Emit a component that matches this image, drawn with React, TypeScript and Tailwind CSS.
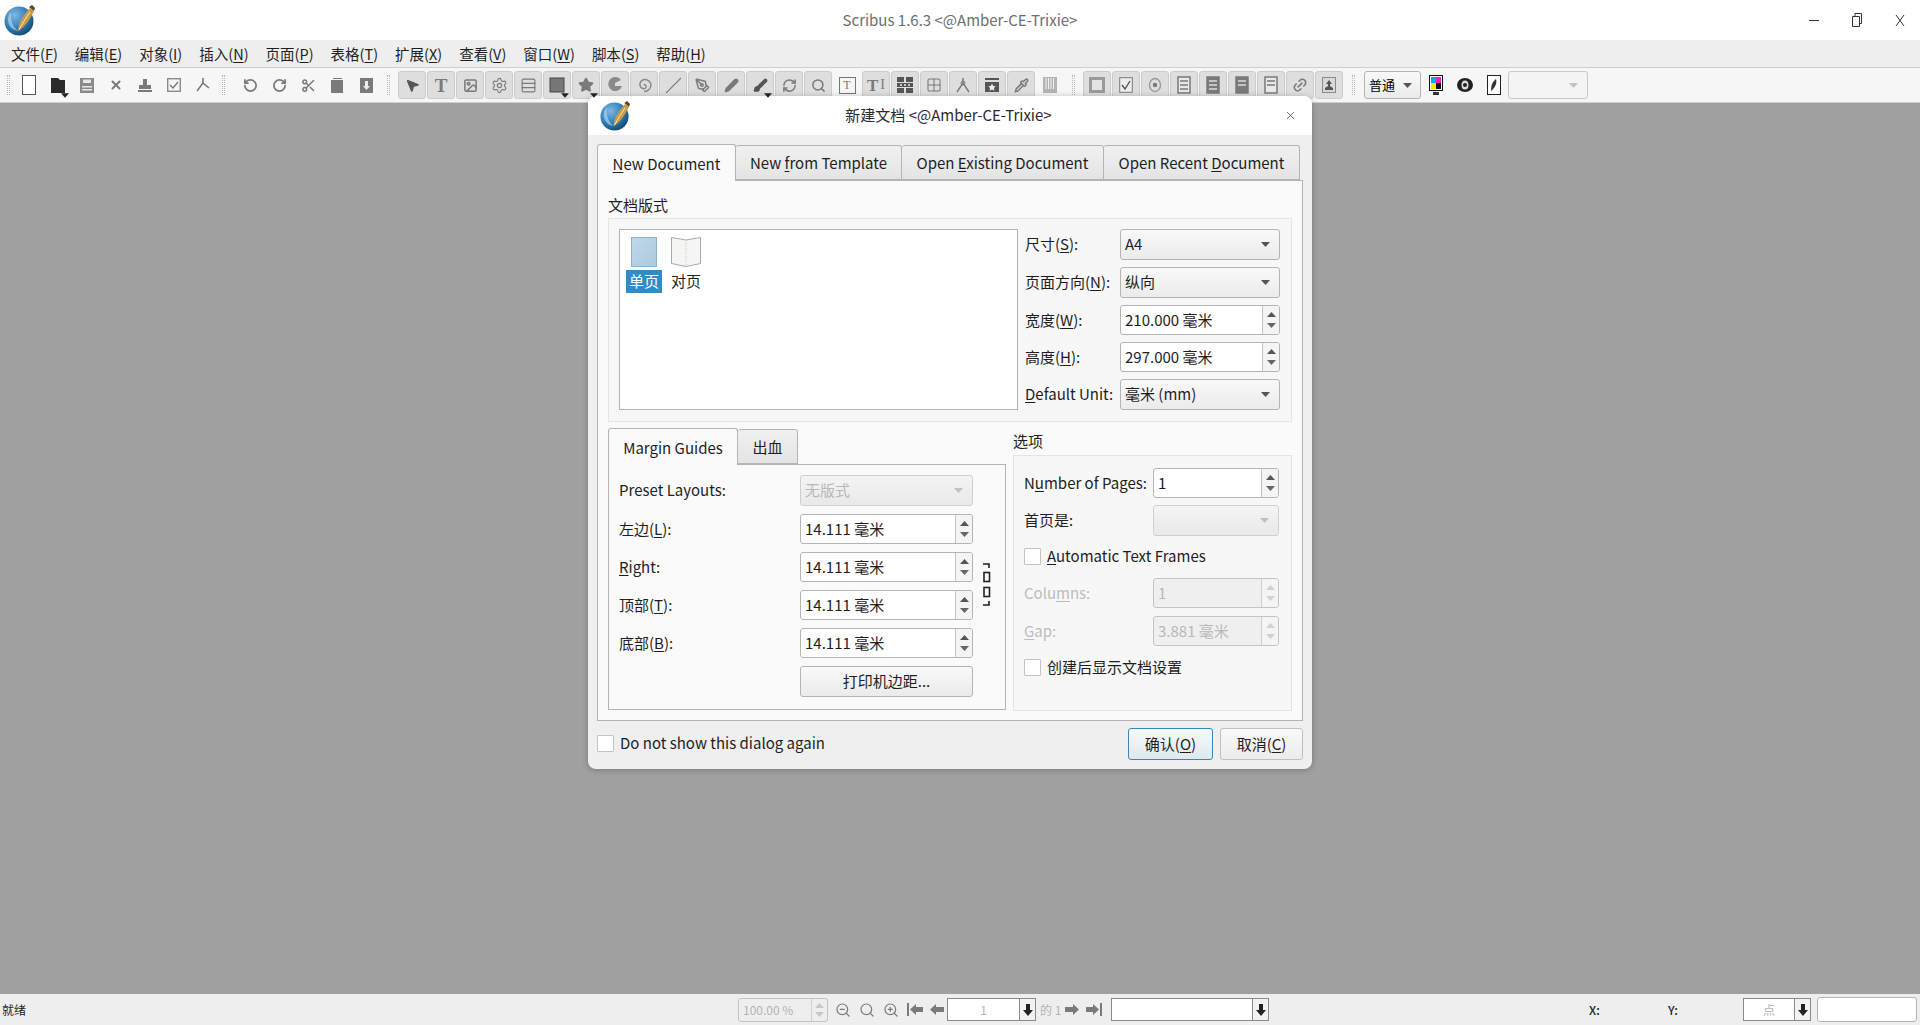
import type { ReactNode } from "react";
import {
  Brush, Grid2x2, Image, Link2, MousePointer2, Pencil, PenTool, Pipette, RefreshCw, RotateCcw, RotateCw,
  Rows3, Scissors, Search, Settings, Slash, Star, X, ZoomIn, ZoomOut,
} from "lucide-react";

const font = { fontFamily: '"Noto Sans CJK SC", "Noto Sans", sans-serif' };
const gray = "#7a7a7a";

function Logo({ size }: { size: number }) {
  return (
    <svg width={size} height={size} viewBox="0 0 32 32">
      <defs>
        <radialGradient id="lg" cx="35%" cy="30%" r="80%">
          <stop offset="0" stopColor="#7fb6e2" />
          <stop offset="0.55" stopColor="#2f7fb8" />
          <stop offset="1" stopColor="#0f3f66" />
        </radialGradient>
      </defs>
      <circle cx="15" cy="17" r="14.5" fill="url(#lg)" />
      <path d="M7 8c-1 8 2 15 7 19-6-1-10-6-10-11 0-3 1-6 3-8z" fill="#cfe4f4" opacity="0.55" />
      <path d="M14 27c0-7 4-15 12-23l4 3c-4 8-8 15-16 20z" fill="#c89a4a" />
      <path d="M25 3l3-2 3 3-1 3z" fill="#5b4420" />
      <path d="M15 26c3-6 7-12 11-18" stroke="#fbe7b8" strokeWidth="1" fill="none" />
    </svg>
  );
}

function Tri({ color = "#555", w = 9 }: { color?: string; w?: number }) {
  return (
    <svg width={w} height={5} viewBox="0 0 9 5">
      <polygon points="0,0 9,0 4.5,5" fill={color} />
    </svg>
  );
}

function Dropper() {
  return (
    <span className="absolute right-[-4px] bottom-[-5px] z-10">
      <Tri color="#222" w={8} />
    </span>
  );
}

function Doc({ lines = 3, dark = false }: { lines?: number; dark?: boolean }) {
  return (
    <svg width="16" height="18" viewBox="0 0 16 18">
      <rect x="2" y="1" width="12" height="16" fill={dark ? gray : "#e8e8e8"} stroke={gray} strokeWidth="1.5" />
      {Array.from({ length: lines }).map((_, i) => (
        <path key={i} d={`M4 ${5 + i * 4}h8`} stroke={dark ? "#ddd" : gray} strokeWidth="1.5" />
      ))}
    </svg>
  );
}

const iconProps = { size: 17, color: gray, strokeWidth: 2.4 };

const fileIcons: ReactNode[] = [
  <svg width="14" height="20" viewBox="0 0 14 20"><rect x="0.5" y="0.5" width="13" height="19" fill="#fff" stroke="#555" /></svg>,
  <span className="relative flex">
    <svg width="14" height="15" viewBox="0 0 14 15"><path d="M0 0h7l2 2h5v13H0z" fill="#2b2b2b" /></svg>
    <Dropper />
  </span>,
  <svg width="14" height="15" viewBox="0 0 14 15"><path d="M0 0h14v15H0z" fill="#8a8a8a" /><path d="M3 1.500h8v3.500H3zM2 8h10v1.500H2zM2 11h10v1.500H2z" fill="#e8e8e8" /></svg>,
  <X size={14} color={gray} strokeWidth={3.4} />,
  <svg width="14" height="14" viewBox="0 0 14 14"><path d="M5 1h4v6H5zM1 7h12v4H1zM0 12h14v2H0z" fill={gray} /></svg>,
  <svg width="14" height="14" viewBox="0 0 14 14"><rect x="0.7" y="0.7" width="12.6" height="12.6" fill="none" stroke="#8a8a8a" strokeWidth="1.4" /><path d="M3 7l3 3 5-6" fill="none" stroke={gray} strokeWidth="1.4" /></svg>,
  <svg width="14" height="14" viewBox="0 0 14 14"><path d="M7 0v5L1 13M7 5l6 5" fill="none" stroke={gray} strokeWidth="1.6" /></svg>,
];

const editIcons: ReactNode[] = [
  <RotateCcw {...iconProps} strokeWidth={2.8} size={15} />,
  <RotateCw {...iconProps} strokeWidth={2.8} size={15} />,
  <Scissors {...iconProps} size={15} />,
  <svg width="13" height="15" viewBox="0 0 13 15"><path d="M2 0h9v1H2zM0 2h12v13H0z" fill={gray} /></svg>,
  <svg width="13" height="15" viewBox="0 0 13 15"><path d="M0 0h13v15H0z" fill={gray} /><path d="M5 3h3v5h2l-3.500 4L3 8h2z" fill="#eee" /></svg>,
];

const serifT = (size: string, extra?: ReactNode) => (
  <span className="flex items-center leading-none" style={{ fontFamily: '"Liberation Serif", serif', color: gray, fontSize: size, fontWeight: 700 }}>
    T{extra}
  </span>
);

const toolIcons: ReactNode[] = [
  <MousePointer2 size={15} color="#555" fill="#555" />,
  serifT("19px"),
  <Image {...iconProps} size={15} />,
  <Settings {...iconProps} strokeWidth={1.6} />,
  <Rows3 {...iconProps} strokeWidth={1.6} />,
  <span className="relative flex">
    <svg width="16" height="16" viewBox="0 0 16 16"><rect x="1" y="1" width="14" height="14" fill="#777" stroke="#444" /></svg>
    <Dropper />
  </span>,
  <span className="relative flex">
    <Star size={16} color={gray} fill={gray} />
    <Dropper />
  </span>,
  <svg width="16" height="16" viewBox="0 0 16 16"><path d="M14 3A7 7 0 1 0 15 9H8V6z" fill="#8a8a8a" /></svg>,
  <svg width="16" height="16" viewBox="0 0 16 16"><path d="M8 8.500a1 1 0 0 1 1-1 2.500 2.500 0 0 1 0 4 4 4 0 0 1-5-3 5 5 0 0 1 5-6 6 6 0 0 1 6 6 7 7 0 0 1-7 6" fill="none" stroke="#8a8a8a" strokeWidth="1.5" /></svg>,
  <Slash {...iconProps} strokeWidth={1.8} />,
  <PenTool {...iconProps} size={15} />,
  <Pencil size={15} color={gray} fill={gray} />,
  <span className="relative flex">
    <Brush size={15} color="#555" fill="#555" />
    <Dropper />
  </span>,
  <RefreshCw {...iconProps} size={15} />,
  <Search {...iconProps} size={15} />,
  <span className="flex h-[17px] w-[17px] items-center justify-center border border-[#777] text-[12px] leading-none" style={{ fontFamily: '"Liberation Serif", serif', color: gray }}>T</span>,
  serifT("17px", <span className="ml-[2px] text-[14px] font-normal">I</span>),
  <svg width="16" height="16" viewBox="0 0 16 16"><path d="M0 0h7v5H0zM9 0h7v5H9zM0 11h7v5H0zM9 11h7v5H9zM0 6h16v4H0z" fill="#555" /><path d="M3 8h2M7 8h2M11 8h2" stroke="#eee" strokeWidth="1.4" /></svg>,
  <Grid2x2 {...iconProps} strokeWidth={1.6} size={16} />,
  <svg width="16" height="16" viewBox="0 0 16 16"><path d="M8 1v5M8 6l-6 9M8 6l6 9" fill="none" stroke={gray} strokeWidth="1.4" /><circle cx="8" cy="6" r="2" fill="none" stroke={gray} /></svg>,
  <svg width="16" height="16" viewBox="0 0 16 16"><path d="M1 1h14v2H1zM1 5h14v10H1z" fill="#555" /><path d="M8 6.500l1.200 2.500 2.600.3-1.900 1.800.5 2.600L8 12.400l-2.400 1.300.5-2.600-1.900-1.800 2.600-.3z" fill="#eee" /></svg>,
  <Pipette {...iconProps} size={15} />,
];

const pdfIcons: ReactNode[] = [
  <svg width="16" height="16" viewBox="0 0 16 16"><rect x="0" y="0" width="16" height="16" fill="#9a9a9a" /><rect x="3" y="3" width="10" height="10" fill="#e3e3e3" /></svg>,
  <svg width="14" height="16" viewBox="0 0 14 16"><rect x="0.7" y="0.7" width="12.6" height="14.6" fill="#eee" stroke={gray} /><path d="M3 8l3 4 5-8" fill="none" stroke="#555" strokeWidth="1.4" /></svg>,
  <svg width="14" height="16" viewBox="0 0 14 16"><ellipse cx="7" cy="8" rx="5.500" ry="6.500" fill="none" stroke="#999" strokeWidth="1.4" /><circle cx="7" cy="8" r="2.200" fill={gray} /></svg>,
  <Doc lines={3} />,
  <Doc lines={3} dark />,
  <Doc lines={2} dark />,
  <Doc lines={2} />,
  <Link2 {...iconProps} size={16} className="-rotate-45" />,
  <svg width="14" height="16" viewBox="0 0 14 16"><rect x="0.5" y="0.5" width="13" height="15" fill="#d8d8d8" stroke="#8a8a8a" /><path d="M7 3l3 4H8v2l3 2v2H3v-2l3-2V7H4z" fill="#555" /></svg>,
];

function ToolBtn({ children, pressed = true }: { children: ReactNode; pressed?: boolean }) {
  return (
    <div
      className={`flex h-[28px] w-[28px] shrink-0 items-center justify-center rounded-[3px] border ${
        pressed ? "border-[#cccccc] bg-[#dedede]" : "border-transparent"
      }`}
    >
      {children}
    </div>
  );
}

function Handle({ className = "" }: { className?: string }) {
  return <div className={`h-[20px] w-[3px] shrink-0 border-x border-dotted border-[#b8b8b8] ${className}`} />;
}

function Combo({ value, disabled, className = "" }: { value?: ReactNode; disabled?: boolean; className?: string }) {
  return (
    <div
      className={`flex h-[31px] items-center justify-between rounded-[3px] border pl-[4px] pr-[9px] ${
        disabled
          ? "border-[#cfcfcf] bg-gradient-to-b from-[#f4f4f4] to-[#e9e9e9] text-[#b8b8b8]"
          : "border-[#b4b4b4] bg-gradient-to-b from-[#f9f9f9] to-[#ebebeb]"
      } ${className}`}
    >
      <span>{value}</span>
      <Tri color={disabled ? "#c0c0c0" : "#555"} />
    </div>
  );
}

function Spin({ value, disabled, className = "" }: { value: string; disabled?: boolean; className?: string }) {
  return (
    <div
      className={`flex h-[30px] items-stretch overflow-hidden rounded-[3px] border ${
        disabled ? "border-[#c4c4c4] bg-[#efefef] text-[#b8b8b8]" : "border-[#b4b4b4] bg-white"
      } ${className}`}
    >
      <span className="flex flex-1 items-center pl-[4px]">{value}</span>
      <span className={`flex w-[17px] flex-col items-center justify-center gap-[6px] border-l ${disabled ? "border-[#d0d0d0] bg-[#f4f4f4]" : "border-[#c4c4c4] bg-[#f4f4f4]"}`}>
        <span className="rotate-180">
          <Tri color={disabled ? "#d0d0d0" : "#555"} />
        </span>
        <Tri color={disabled ? "#d0d0d0" : "#666"} />
      </span>
    </div>
  );
}

function Check({ children }: { children: ReactNode }) {
  return (
    <div className="flex h-[17px] items-center gap-[6px]">
      <span className="h-[17px] w-[17px] shrink-0 rounded-[1px] border border-[#c4c4c4] bg-white" />
      <span>{children}</span>
    </div>
  );
}

function DialogTab({ children, active, className = "" }: { children: ReactNode; active?: boolean; className?: string }) {
  return (
    <div
      className={`relative flex items-center justify-center rounded-t-[3px] border border-[#b4b4b4] pt-[2px] ${
        active
          ? "z-10 -mb-px h-[37px] border-b-0 bg-[#fafafa]"
          : "h-[35px] bg-gradient-to-b from-[#f0f0f0] to-[#e4e4e4]"
      } ${className}`}
    >
      {children}
    </div>
  );
}

const menus: [string, string][] = [
  ["文件", "F"], ["编辑", "E"], ["对象", "I"], ["插入", "N"], ["页面", "P"], ["表格", "T"],
  ["扩展", "X"], ["查看", "V"], ["窗口", "W"], ["脚本", "S"], ["帮助", "H"],
];

function FirstPageIcon({ flip }: { flip?: boolean }) {
  return (
    <svg width="16" height="13" viewBox="0 0 16 13" className={flip ? "-scale-x-100" : ""}>
      <path d="M0 0h2v13H0zM3 6.500L9 1v3h7v5H9v3z" fill={gray} />
    </svg>
  );
}

function PrevIcon({ flip }: { flip?: boolean }) {
  return (
    <svg width="14" height="13" viewBox="0 0 14 13" className={flip ? "-scale-x-100" : ""}>
      <path d="M0 6.500L6 1v3h8v5H6v3z" fill={gray} />
    </svg>
  );
}

function DownArrow() {
  return (
    <svg width="10" height="12" viewBox="0 0 10 12">
      <path d="M3 0h4v6h3l-5 6-5-6h3z" fill="#222" />
    </svg>
  );
}

function StatusCombo({ value, className = "" }: { value?: string; className?: string }) {
  return (
    <div className={`flex h-[23px] items-stretch border border-[#8a8a8a] bg-white ${className}`}>
      <span className="flex flex-1 items-center justify-center text-[#b4b4b4]">{value}</span>
      <span className="flex w-[16px] items-center justify-center border-l border-[#8a8a8a] bg-[#f2f2f2]">
        <DownArrow />
      </span>
    </div>
  );
}

export default function App() {
  return (
    <div className="relative flex h-screen w-screen flex-col overflow-hidden bg-[#a0a0a0] text-[15px] text-[#1e1e1e]" style={font}>
      {/* Window title */}
      <header className="grid h-[40px] shrink-0 grid-cols-[1fr_auto_1fr] items-center bg-white pl-[4px] pr-[15px]">
        <Logo size={32} />
        <span className="ml-[11px] text-[#6e6e6e]">Scribus 1.6.3 &lt;@Amber-CE-Trixie&gt;</span>
        <div className="flex items-center justify-end gap-[33px] text-[#444]">
          <span className="h-px w-[10px] bg-[#333]" />
          <svg width="10" height="14" viewBox="0 0 10 14"><path d="M0.500 3.500h7v10h-7zM3 3.500v-3h6.500v10H7.500" fill="none" stroke="#333" /></svg>
          <svg width="10" height="13" viewBox="0 0 10 13"><path d="M1 1l8 11M9 1L1 12" stroke="#333" fill="none" /></svg>
        </div>
      </header>

      {/* Menu bar */}
      <nav className="flex h-[27px] shrink-0 items-center gap-[17px] bg-[#eeeeee] pl-[11px] text-[14.500px]">
        {menus.map(([name, key]) => (
          <span key={key}>
            {name}(<u className="underline-offset-2">{key}</u>)
          </span>
        ))}
      </nav>

      {/* Toolbar */}
      <div className="flex h-[36px] shrink-0 items-center border-y border-[#cfcfcf] bg-[#f6f6f6] pl-[7px]">
        <Handle className="mr-[4px]" />
        {fileIcons.map((icon, i) => (
          <div key={i} className="flex w-[29px] shrink-0 items-center justify-center">{icon}</div>
        ))}
        <Handle className="mx-[5px]" />
        <div className="w-[6px]" />
        {editIcons.map((icon, i) => (
          <div key={i} className="flex w-[29px] shrink-0 items-center justify-center">{icon}</div>
        ))}
        <Handle className="mx-[6px]" />
        <div className="ml-[2px] flex gap-px">
          {toolIcons.map((icon, i) => (
            <ToolBtn key={i} pressed={i !== 15}>{icon}</ToolBtn>
          ))}
          <ToolBtn pressed={false}>
            <svg width="14" height="16" viewBox="0 0 14 16">
              <rect width="14" height="16" fill="#b4b4b4" />
              <path d="M3 1v11M5.500 1v11M8 1v11M10.500 1v11" stroke="#f2f2f2" />
            </svg>
          </ToolBtn>
        </div>
        <Handle className="mx-[8px]" />
        <div className="flex gap-px">
          {pdfIcons.map((icon, i) => (
            <ToolBtn key={i}>{icon}</ToolBtn>
          ))}
        </div>
        <Handle className="mx-[9px]" />
        <div className="flex h-[28px] w-[57px] items-center justify-between rounded-[3px] border border-[#b4b4b4] bg-gradient-to-b from-[#f9f9f9] to-[#ebebeb] pl-[4px] pr-[8px] text-[13px] text-black">
          普通
          <Tri />
        </div>
        <div className="flex w-[29px] justify-center">
          <svg width="14" height="20" viewBox="0 0 14 20">
            <rect x="0.500" y="0.500" width="13" height="15" fill="#fff" stroke="#111" />
            <rect x="2" y="2" width="5" height="6" fill="#00a8f0" />
            <rect x="7" y="2" width="5" height="6" fill="#f020c0" />
            <rect x="2" y="8" width="5" height="6" fill="#ffe600" />
            <rect x="7" y="8" width="5" height="6" fill="#111" />
            <rect x="4" y="17" width="6" height="3" fill="#333" />
          </svg>
        </div>
        <div className="flex w-[29px] justify-center">
          <svg width="16" height="14" viewBox="0 0 16 14">
            <ellipse cx="8" cy="7" rx="8" ry="7" fill="#222" />
            <ellipse cx="8" cy="7" rx="3.500" ry="4.500" fill="#ddd" />
            <circle cx="8" cy="7" r="2" fill="#222" />
          </svg>
        </div>
        <div className="flex w-[29px] justify-center">
          <svg width="14" height="20" viewBox="0 0 14 20">
            <rect x="0.500" y="0.500" width="13" height="19" fill="#fff" stroke="#222" />
            <path d="M9 4c1 3 0 8-5 12 0-5 1-9 5-12z" fill="#333" />
          </svg>
        </div>
        <div className="flex h-[28px] w-[80px] items-center justify-end rounded-[3px] border border-[#c8c8c8] bg-[#f4f4f4] pr-[9px]">
          <Tri color="#c4c4c4" />
        </div>
      </div>

      <main className="flex-1" />

      {/* Status bar */}
      <footer className="flex h-[31px] shrink-0 items-center bg-[#eeeeee] text-[12px]">
        <span className="ml-[2px] w-[736px]">就绪</span>
        <div className="flex h-[24px] w-[90px] items-stretch rounded-[3px] border border-[#c4c4c4] text-[#b4b4b4]">
          <span className="flex flex-1 items-center pl-[4px]">100.00 %</span>
          <span className="flex w-[16px] flex-col items-center justify-center gap-[4px] border-l border-[#d0d0d0]">
            <span className="rotate-180"><Tri color="#c8c8c8" /></span>
            <Tri color="#c8c8c8" />
          </span>
        </div>
        <div className="ml-[3px] flex w-[72px] items-center justify-around">
          <ZoomOut size={16} color={gray} strokeWidth={1.8} />
          <Search size={16} color={gray} strokeWidth={1.8} />
          <ZoomIn size={16} color={gray} strokeWidth={1.8} />
        </div>
        <div className="ml-[4px] flex w-[37px] items-center justify-between">
          <FirstPageIcon />
          <PrevIcon />
        </div>
        <StatusCombo value="1" className="ml-[3px] w-[89px]" />
        <span className="ml-[4px] w-[24px] text-[#b4b4b4]">的 1</span>
        <div className="ml-[1px] flex w-[37px] items-center justify-between">
          <PrevIcon flip />
          <FirstPageIcon flip />
        </div>
        <StatusCombo className="ml-[9px] w-[158px]" />
        <span className="ml-[320px] w-[79px] font-medium">X:</span>
        <span className="w-[75px] font-medium">Y:</span>
        <StatusCombo value="点" className="w-[68px]" />
        <div className="ml-[6px] h-[25px] w-[100px] rounded-[3px] border border-[#b4b4b4] bg-white" />
      </footer>

      {/* New document dialog */}
      <div className="absolute left-[588px] top-[96px] flex h-[673px] w-[724px] flex-col overflow-hidden rounded-[8px] bg-[#efefef] shadow-[0_1px_6px_rgba(0,0,0,0.25)]">
        <div className="grid h-[39px] shrink-0 grid-cols-[1fr_auto_1fr] items-center bg-white pl-[12px] pr-[15px]">
          <Logo size={31} />
          <span className="text-[#2a2a2a]">新建文档 &lt;@Amber-CE-Trixie&gt;</span>
          <div className="flex justify-end">
            <X size={13} color="#444" strokeWidth={1.4} />
          </div>
        </div>

        <div className="px-[9px] pt-[9px]">
          <div className="flex h-[36px] items-end pt-[1px]">
            <DialogTab active className="w-[139px]"><span><u className="underline-offset-2">N</u>ew Document</span></DialogTab>
            <DialogTab className="w-[166px] border-l-0">
              <span>New <u className="underline-offset-2">f</u>rom Template</span>
            </DialogTab>
            <DialogTab className="w-[202px] border-l-0">
              <span>Open <u className="underline-offset-2">E</u>xisting Document</span>
            </DialogTab>
            <DialogTab className="w-[196px] border-l-0">
              <span>Open Recent <u className="underline-offset-2">D</u>ocument</span>
            </DialogTab>
          </div>

          <div className="h-[541px] w-[706px] border border-[#b4b4b4] bg-[#fafafa] px-[10px]">
            <div className="flex h-[37px] items-center pt-[11px]">文档版式</div>

            <div className="flex h-[204px] w-[684px] gap-[7px] border border-[#e4e4e4] bg-[#f7f7f7] py-[10px] pl-[10px]">
              <div className="h-[181px] w-[399px] border border-[#b4b4b4] bg-white">
                <div className="flex gap-[6px] pl-[6px] pt-[7px]">
                  <div className="flex w-[36px] flex-col items-center gap-[3px]">
                    <div className="h-[30px] w-[26px] border border-[#8fb2c8] bg-gradient-to-br from-[#bcd8ea] to-[#aecbdc]" />
                    <span className="flex h-[23px] w-full items-center justify-center bg-[#308cc6] text-white">单页</span>
                  </div>
                  <div className="flex w-[36px] flex-col items-center gap-[3px]">
                    <svg width="30" height="30" viewBox="0 0 30 30">
                      <path d="M0.500 0.500L15 3l14.500-2.500v26L15 29.500 0.500 26.500z" fill="#f5f5f3" stroke="#a8a8a8" />
                      <path d="M15 3v26" stroke="#c8c8c8" strokeDasharray="1 1" />
                    </svg>
                    <span className="flex h-[23px] items-center">对页</span>
                  </div>
                </div>
              </div>

              <div className="grid h-[181px] grid-cols-[95px_160px] content-between items-center">
                <span>尺寸(<u className="underline-offset-2">S</u>):</span>
                <Combo value="A4" />
                <span>页面方向(<u className="underline-offset-2">N</u>):</span>
                <Combo value="纵向" />
                <span>宽度(<u className="underline-offset-2">W</u>):</span>
                <Spin value="210.000 毫米" />
                <span>高度(<u className="underline-offset-2">H</u>):</span>
                <Spin value="297.000 毫米" />
                <span><u className="underline-offset-2">D</u>efault Unit:</span>
                <Combo value="毫米 (mm)" />
              </div>
            </div>

            <div className="mt-[6px] flex gap-[7px]">
              <div className="w-[398px]">
                <div className="flex h-[36px] items-end">
                  <DialogTab active className="w-[130px]">Margin Guides</DialogTab>
                  <DialogTab className="w-[60px] border-l-0">出血</DialogTab>
                </div>
                <div className="flex h-[246px] border border-[#b4b4b4] bg-[#fafafa] pl-[10px] pt-[10px]">
                  <div className="grid w-[354px] grid-cols-[181px_173px] grid-rows-[31px_30px_30px_30px_30px_31px] items-center gap-y-[8px]">
                    <span>Preset Layouts:</span>
                    <Combo value="无版式" disabled />
                    <span>左边(<u className="underline-offset-2">L</u>):</span>
                    <Spin value="14.111 毫米" />
                    <span><u className="underline-offset-2">R</u>ight:</span>
                    <Spin value="14.111 毫米" />
                    <span>顶部(<u className="underline-offset-2">T</u>):</span>
                    <Spin value="14.111 毫米" />
                    <span>底部(<u className="underline-offset-2">B</u>):</span>
                    <Spin value="14.111 毫米" />
                    <span />
                    <div className="flex h-[31px] items-center justify-center rounded-[3px] border border-[#b4b4b4] bg-gradient-to-b from-[#f9f9f9] to-[#ebebeb]">打印机边距...</div>
                  </div>
                  <div className="ml-[10px] pt-[88px]">
                    <svg width="8" height="43" viewBox="0 0 8 43">
                      <path d="M0 1h6v4M0 42h6v-4" fill="none" stroke="#222" strokeWidth="1.6" />
                      <rect x="1" y="9.500" width="5.500" height="9" fill="none" stroke="#222" strokeWidth="1.6" />
                      <rect x="1" y="24.500" width="5.500" height="9" fill="none" stroke="#222" strokeWidth="1.6" />
                    </svg>
                  </div>
                </div>
              </div>

              <div className="w-[279px]">
                <div className="flex h-[27px] items-center">选项</div>
                <div className="flex h-[256px] flex-col border border-[#e4e4e4] bg-[#f7f7f7] pl-[10px] pr-[12px] pt-[12px]">
                  <div className="grid grid-cols-[129px_126px] items-center gap-y-[7px]">
                    <span>N<u className="underline-offset-2">u</u>mber of Pages:</span>
                    <Spin value="1" />
                    <span>首页是:</span>
                    <Combo disabled />
                  </div>
                  <div className="mt-[12px]">
                    <Check><u className="underline-offset-2">A</u>utomatic Text Frames</Check>
                  </div>
                  <div className="mt-[13px] grid grid-cols-[129px_126px] items-center gap-y-[8px]">
                    <span className="text-[#bcbcbc]">Colu<u className="underline-offset-2">m</u>ns:</span>
                    <Spin value="1" disabled />
                    <span className="text-[#bcbcbc]"><u className="underline-offset-2">G</u>ap:</span>
                    <Spin value="3.881 毫米" disabled />
                  </div>
                  <div className="mt-[13px]">
                    <Check>创建后显示文档设置</Check>
                  </div>
                </div>
              </div>
            </div>
          </div>

          <div className="flex items-start justify-between pt-[7px]">
            <div className="pt-[7px]">
              <Check>Do not show this dialog again</Check>
            </div>
            <div className="flex gap-[7px]">
              <div className="flex h-[32px] w-[85px] items-center justify-center rounded-[3px] border border-[#3a86b4] bg-gradient-to-b from-[#f7f9fa] to-[#dfe8ee]">
                <span>确认(<u className="underline-offset-2">O</u>)</span>
              </div>
              <div className="flex h-[32px] w-[83px] items-center justify-center rounded-[3px] border border-[#c0c0c0] bg-gradient-to-b from-[#f9f9f9] to-[#ececec]">
                <span>取消(<u className="underline-offset-2">C</u>)</span>
              </div>
            </div>
          </div>
        </div>
      </div>
    </div>
  );
}
